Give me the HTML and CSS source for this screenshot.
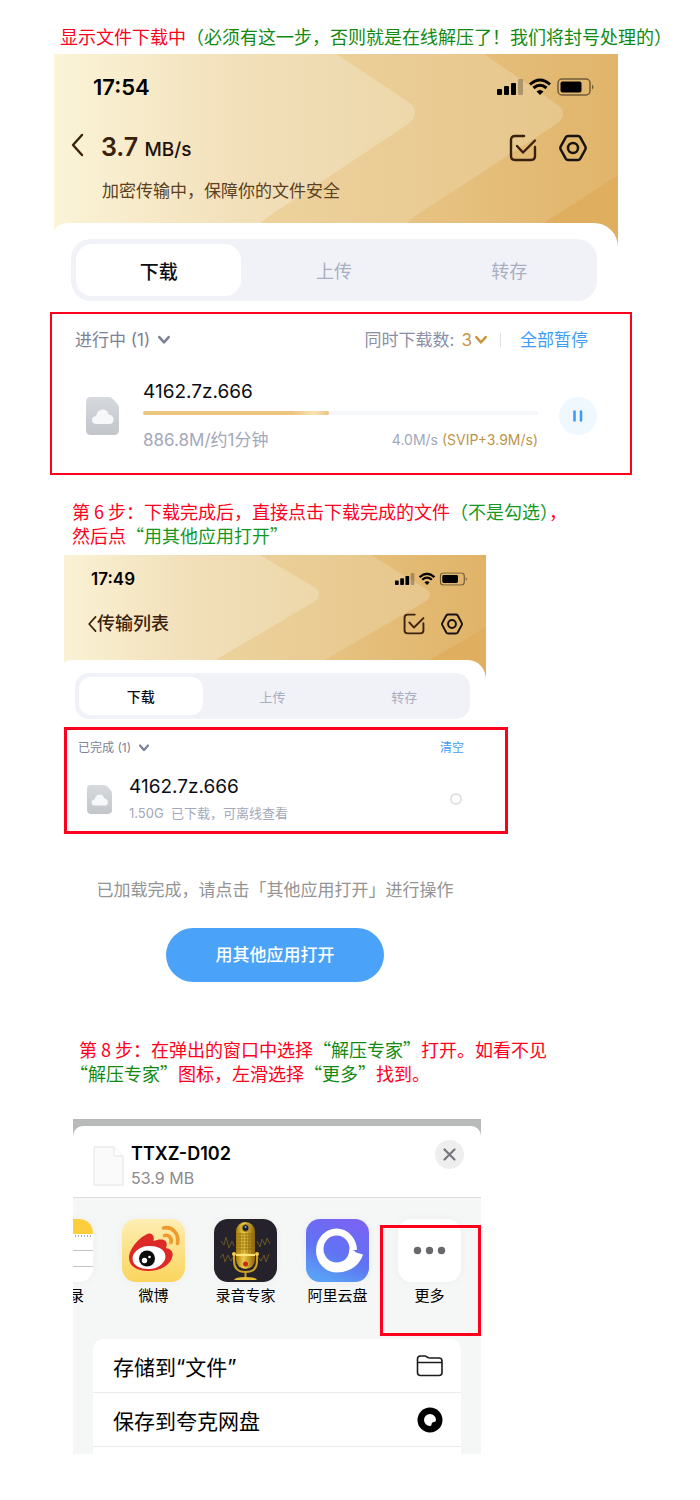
FILE: index.html
```html
<!DOCTYPE html>
<html lang="zh-CN">
<head>
    <meta charset="UTF-8">
    <meta name="viewport" content="width=device-width, initial-scale=1.0">
    <title>文件下载教程</title>
    <link rel="stylesheet" href="styles.css">
</head>
<body>

<!-- shared icons -->
<svg class="defs" width="0" height="0" aria-hidden="true">
    <defs>
        <linearGradient id="gold1" gradientUnits="userSpaceOnUse" x1="0" y1="0" x2="364" y2="0">
            <stop offset="0" stop-color="#fbf4d8"/>
            <stop offset="0.5" stop-color="#f2e0ba"/>
            <stop offset="1" stop-color="#edd7aa"/>
        </linearGradient>
        <linearGradient id="gold2" gradientUnits="userSpaceOnUse" x1="215" y1="0" x2="512" y2="0">
            <stop offset="0" stop-color="#edd29c"/>
            <stop offset="1" stop-color="#e6c68b"/>
        </linearGradient>
        <linearGradient id="gold3" gradientUnits="userSpaceOnUse" x1="358" y1="0" x2="584" y2="0">
            <stop offset="0" stop-color="#e7c383"/>
            <stop offset="1" stop-color="#e0b368"/>
        </linearGradient>
        <linearGradient id="fileGray" x1="0" y1="0" x2="0" y2="1">
            <stop offset="0" stop-color="#d6d9dd"/>
            <stop offset="1" stop-color="#c2c5ca"/>
        </linearGradient>
        <linearGradient id="weiboBg" x1="0" y1="0" x2="0" y2="1">
            <stop offset="0" stop-color="#fdeeb4"/>
            <stop offset="1" stop-color="#fad45c"/>
        </linearGradient>
        <linearGradient id="micGold" x1="0" y1="0" x2="1" y2="0">
            <stop offset="0" stop-color="#a87a10"/>
            <stop offset="0.4" stop-color="#f0cd45"/>
            <stop offset="1" stop-color="#8d6408"/>
        </linearGradient>
        <linearGradient id="aliBg" x1="0.8" y1="0" x2="0.4" y2="1">
            <stop offset="0" stop-color="#7b62f3"/>
            <stop offset="0.6" stop-color="#5f74f3"/>
            <stop offset="1" stop-color="#5aa0f6"/>
        </linearGradient>

        <g id="goldBg">
            <rect width="600" height="193" fill="#dfae5f"/>
            <path d="M0 0H577L649 54Q656 60 649 66L490 169V193H0Z" fill="url(#gold3)"/>
            <path d="M0 0H430L504 51Q514 59 504 69L358 164L330 193H0Z" fill="url(#gold2)"/>
            <path d="M0 0H282L356 49Q366 58 356 69L215 162L180 193H0Z" fill="url(#gold1)"/>
        </g>
    </defs>

    <symbol id="signals" viewBox="0 0 98 18">
        <rect x="0" y="11" width="5" height="6" rx="1"/>
        <rect x="7" y="8" width="5" height="9" rx="1"/>
        <rect x="14" y="5" width="5" height="12" rx="1"/>
        <rect x="21" y="1" width="5" height="16" rx="1" opacity="0.25"/>
        <path d="M33 6.500Q43 -2.500 53 6.500M36.500 10Q43 4.500 49.500 10" fill="none" stroke="#000" stroke-width="3"/>
        <path d="M39.500 13.500Q43 10.500 46.500 13.500L43 17Z"/>
        <rect x="61" y="1" width="32" height="16" rx="4" fill="none" stroke="#000" stroke-opacity="0.5" stroke-width="1.500"/>
        <rect x="63.500" y="3.500" width="21" height="11" rx="2"/>
        <path d="M95 6.500Q98 9 95 11.500Z" opacity="0.5"/>
    </symbol>

    <symbol id="check" viewBox="0 0 28 28">
        <path d="M15 2H6Q2 2 2 6V22Q2 26 6 26H22Q26 26 26 22V13M8 12L14 18.500L26 6.500" fill="none" stroke="#3b210b" stroke-width="2.400" stroke-linecap="round" stroke-linejoin="round"/>
    </symbol>

    <symbol id="hex" viewBox="0 0 28 28">
        <path d="M9 2H19Q20.500 2 21.300 3.300L26.300 12.500Q27 14 26.300 15.500L21.300 24.700Q20.500 26 19 26H9Q7.500 26 6.700 24.700L1.700 15.500Q1 14 1.700 12.500L6.700 3.300Q7.500 2 9 2Z" fill="none" stroke="#171310" stroke-width="2.500"/>
        <circle cx="14" cy="14" r="5" fill="none" stroke="#171310" stroke-width="2.500"/>
    </symbol>

    <symbol id="back" viewBox="0 0 14 24">
        <path d="M12 2L3 12L12 22" fill="none" stroke="#3b210b" stroke-width="2.400" stroke-linecap="round" stroke-linejoin="round"/>
    </symbol>

    <symbol id="down" viewBox="0 0 12 10">
        <path d="M2 2.500L6 7L10 2.500" fill="none" stroke="currentColor" stroke-width="2.200" stroke-linecap="round" stroke-linejoin="round"/>
    </symbol>

    <symbol id="file" viewBox="0 0 33 38">
        <path d="M5 0H23Q25 0 27 2L31 6.500Q33 8.500 33 11V33Q33 38 28 38H5Q0 38 0 33V5Q0 0 5 0Z" fill="url(#fileGray)"/>
        <path d="M10.500 27Q6 27 6 23Q6 19.500 10 19Q11.500 12.500 17 12.500Q21.500 12.500 22.500 17.500Q27.500 18 27.500 22.500Q27.500 27 23 27Z" fill="#f7f8f9"/>
    </symbol>
</svg>

<p class="caption caption-top">显示文件下载中<span class="green">（必须有这一步，否则就是在线解压了！我们将封号处理的）</span></p>

<!-- downloading -->
<section class="phone phone-large">
    <div class="gold">
        <svg class="gold-bg" viewBox="0 0 564 193" preserveAspectRatio="none" aria-hidden="true"><use href="#goldBg"/></svg>
        <div class="status">
            <span>17:54</span>
            <svg class="signals" viewBox="0 0 98 18"><use href="#signals"/></svg>
        </div>
        <div class="title-row">
            <button class="icon-btn" aria-label="返回"><svg class="back" viewBox="0 0 14 24"><use href="#back"/></svg></button>
            <h2 class="speed">3.7 <small>MB/s</small></h2>
            <div class="actions">
                <button class="icon-btn" aria-label="选择"><svg class="action" viewBox="0 0 28 28"><use href="#check"/></svg></button>
                <button class="icon-btn" aria-label="设置"><svg class="action" viewBox="0 0 28 28"><use href="#hex"/></svg></button>
            </div>
        </div>
        <p class="safe">加密传输中，保障你的文件安全</p>
    </div>
    <div class="sheet">
        <div class="tabs">
            <button class="tab active">下载</button>
            <button class="tab">上传</button>
            <button class="tab">转存</button>
        </div>
    </div>
</section>

<section class="redbox box-loading">
    <div class="list-head">
        <button class="text-btn group">进行中 (1)<svg class="down" viewBox="0 0 12 10"><use href="#down"/></svg></button>
        <div class="head-right">
            <span>同时下载数:</span>
            <button class="text-btn count">3<svg class="down" viewBox="0 0 12 10"><use href="#down"/></svg></button>
            <span class="divider"></span>
            <button class="text-btn blue">全部暂停</button>
        </div>
    </div>
    <div class="item">
        <svg class="file" viewBox="0 0 33 38"><use href="#file"/></svg>
        <div class="item-body">
            <div class="name">4162.7z.666</div>
            <div class="bar"><div class="bar-fill" style="width: 47%"></div></div>
            <div class="meta">
                <span>886.8M/约1分钟</span>
                <span class="rate">4.0M/s <span class="svip">(SVIP+3.9M/s)</span></span>
            </div>
        </div>
        <button class="pause" aria-label="暂停">
            <svg width="12" height="12" viewBox="0 0 12 12"><path d="M2.500 1.500V10.500M9 1.500V10.500" stroke="#3e9cf5" stroke-width="2.600" stroke-linecap="round"/></svg>
        </button>
    </div>
</section>

<p class="caption caption-six">第 6 步：下载完成后，直接点击下载完成的文件<span class="green">（不是勾选）</span>，<br>然后点<span class="green">“用其他应用打开”</span></p>

<!-- finished -->
<section class="phone phone-small">
    <div class="gold">
        <svg class="gold-bg" viewBox="20 0 564 193" preserveAspectRatio="none" aria-hidden="true"><use href="#goldBg"/></svg>
        <div class="status">
            <span>17:49</span>
            <svg class="signals" viewBox="0 0 98 18"><use href="#signals"/></svg>
        </div>
        <div class="title-row">
            <button class="icon-btn" aria-label="返回"><svg class="back" viewBox="0 0 14 24"><use href="#back"/></svg></button>
            <h2 class="page-title">传输列表</h2>
            <div class="actions">
                <button class="icon-btn" aria-label="选择"><svg class="action" viewBox="0 0 28 28"><use href="#check"/></svg></button>
                <button class="icon-btn" aria-label="设置"><svg class="action" viewBox="0 0 28 28"><use href="#hex"/></svg></button>
            </div>
        </div>
    </div>
    <div class="sheet">
        <div class="tabs">
            <button class="tab active">下载</button>
            <button class="tab">上传</button>
            <button class="tab">转存</button>
        </div>
    </div>
</section>

<section class="redbox box-done">
    <div class="list-head">
        <button class="text-btn group">已完成 (1)<svg class="down" viewBox="0 0 12 10"><use href="#down"/></svg></button>
        <button class="text-btn blue">清空</button>
    </div>
    <div class="item">
        <svg class="file" viewBox="0 0 33 38"><use href="#file"/></svg>
        <div class="item-body">
            <label class="name" for="pick">4162.7z.666</label>
            <div class="meta">1.50G&nbsp; 已下载，可离线查看</div>
        </div>
        <input class="pick" type="checkbox" id="pick">
    </div>
</section>

<section class="open">
    <p>已加载完成，请点击「其他应用打开」进行操作</p>
    <button class="open-btn">用其他应用打开</button>
</section>

<p class="caption caption-eight">第 8 步：在弹出的窗口中选择<span class="green">“解压专家”</span>打开。如看不见<br><span class="green">“解压专家”</span>图标，左滑选择<span class="green">“更多”</span>找到。</p>

<!-- share sheet -->
<section class="share">
    <div class="share-head">
        <svg class="paper" width="31" height="40" viewBox="0 0 31 40">
            <path d="M1 1H21L30 10V39H1Z" fill="#fafafa" stroke="#e3e3e3"/>
            <path d="M21 1V8Q21 10 23 10H30" fill="#fff" stroke="#e3e3e3"/>
        </svg>
        <div class="share-info">
            <h3>TTXZ-D102</h3>
            <p>53.9 MB</p>
        </div>
        <button class="close" aria-label="关闭">
            <svg width="13" height="13" viewBox="0 0 13 13"><path d="M1.500 1.500L11.500 11.500M11.500 1.500L1.500 11.500" stroke="#77777c" stroke-width="2.200" stroke-linecap="round"/></svg>
        </button>
    </div>

    <div class="apps">
        <button class="app">
            <svg class="app-icon" viewBox="0 0 63 63">
                <rect width="63" height="63" fill="#fff"/>
                <rect width="63" height="15" fill="#fcce3c"/>
                <path d="M0 17H63" stroke="#a9a99f" stroke-width="2" stroke-dasharray="1 2"/>
                <path d="M0 31.500H63M0 47.500H63" stroke="#c4c4c4"/>
            </svg>
            <span>备忘录</span>
        </button>
        <button class="app">
            <svg class="app-icon" viewBox="0 0 63 63">
                <rect width="63" height="63" fill="url(#weiboBg)"/>
                <path d="M7 39C7 30 18 17 27 14.500C31 14 32.500 18 31.500 22C36 20 42 19.500 44 22.500C45.500 25 44.500 27 44 29C49 30 51.500 33 50.500 37C49 46 38 52 26 52C15 52 7 47 7 39Z" fill="#dd2a26"/>
                <ellipse cx="27" cy="38.500" rx="16.500" ry="11.500" fill="#fff" transform="rotate(-7 27 38.500)"/>
                <circle cx="25" cy="39.500" r="8" fill="#0b0b0b"/>
                <circle cx="22.500" cy="41.500" r="2.700" fill="#fff"/>
                <circle cx="27.500" cy="38" r="1.300" fill="#fff"/>
                <path d="M41.500 9C50 7 57.500 14.500 55.500 24.500M42.500 16.500C47 15.500 50 19 49 23.500" fill="none" stroke="#ef9a2b" stroke-width="3.600" stroke-linecap="round"/>
            </svg>
            <span>微博</span>
        </button>
        <button class="app">
            <svg class="app-icon" viewBox="0 0 63 63">
                <rect width="63" height="63" fill="#26222c"/>
                <path d="M7 22L10 26L12 18L15 29L18 22L20 27M43 22L46 28L48 20L51 26L53 19L56 25M6 39L9 35L11 43L14 36L17 42L19 38M44 38L47 42L50 36L52 43L55 35" fill="none" stroke="#685923"/>
                <rect x="22" y="3" width="19" height="47" rx="9.500" fill="url(#micGold)"/>
                <path d="M22 15H41M22 18H41M22 21H41M22 24H41M22 27H41M22 30H41M26 14V34M29 14V34M32 14V34M35 14V34M38 14V34" stroke="#8b6810" stroke-width="0.700"/>
                <path d="M22 36H41" stroke="#ffe37a" stroke-width="2"/>
                <circle cx="31.500" cy="9" r="3.500" fill="#15203c" stroke="#ad871d"/>
                <circle cx="31.500" cy="8" r="1" fill="#8ba7df"/>
                <circle cx="31.500" cy="45" r="2.500" fill="#cf291d"/>
                <path d="M20 35V42Q20 53 31.500 53Q43 53 43 42V35M31.500 53V59" fill="none" stroke="#cba024" stroke-width="2"/>
                <circle cx="20" cy="35" r="2" fill="#efcd4c"/>
                <circle cx="43" cy="35" r="2" fill="#efcd4c"/>
                <path d="M20 61Q21 58 31.500 58Q42 58 43 61Z" fill="#e5bd35"/>
            </svg>
            <span>录音专家</span>
        </button>
        <button class="app">
            <svg class="app-icon" viewBox="0 0 63 63">
                <rect width="63" height="63" fill="url(#aliBg)"/>
                <path d="M51 31A20.500 22 0 1 0 30 53.500C42 53.500 53 48 57 35.500L50 33.500L48 31.500L43 30.500L43 33C42 40 36 43.500 31 43.500A13 13.500 0 1 1 43.500 31Z" fill="#fff"/>
            </svg>
            <span>阿里云盘</span>
        </button>
        <button class="app app-more">
            <svg class="app-icon" viewBox="0 0 63 63">
                <rect width="63" height="63" fill="#fff"/>
                <circle cx="19.500" cy="31.500" r="3.700" fill="#67676c"/>
                <circle cx="31.500" cy="31.500" r="3.700" fill="#67676c"/>
                <circle cx="43.500" cy="31.500" r="3.700" fill="#67676c"/>
            </svg>
            <span>更多</span>
        </button>
    </div>

    <div class="menu">
        <button class="menu-row">存储到“文件”
            <svg width="28" height="24" viewBox="0 0 28 24">
                <path d="M1.500 5Q1.500 2 4.500 2H8.500Q10 2 11 3L12 3.500Q12.500 4 14 4H23Q26 4 26 7V18.500Q26 21.500 23 21.500H4.500Q1.500 21.500 1.500 18.500ZM1.500 8.500H26" fill="none" stroke="#1b1b1b" stroke-width="1.600"/>
            </svg>
        </button>
        <button class="menu-row">保存到夸克网盘
            <svg width="28" height="26" viewBox="0 0 28 26">
                <circle cx="14" cy="13" r="12.500" fill="#000"/>
                <path d="M20 13A6 6 0 1 0 14 19Q15.500 19 15.500 17.500Q15.500 15 18 15Q20 15 20 13Z" fill="#fff"/>
            </svg>
        </button>
    </div>
</section>

</body>
</html>
```
FILE: styles.css
```css
*, *::after {
    box-sizing: border-box;
}
body {
    margin: 0;
    padding: 24px 0 44px;
    background-color: #fff;
    color: #000;
    font-family: Inter, "Noto Sans CJK SC", sans-serif;
}
h2, h3, p {
    margin: 0;
}
button {
    margin: 0;
    padding: 0;
    border: none;
    background: none;
    color: inherit;
    font: inherit;
    cursor: pointer;
}
svg {
    display: block;
    flex-shrink: 0;
}
.defs {
    position: absolute;
}

/* captions */
.caption {
    font-family: "Noto Sans CJK SC", sans-serif;
    font-size: 18px;
    line-height: 24px;
    color: #ff001c;
    text-spacing-trim: trim-start;
}
.green {
    color: #128a12;
}
.caption-top {
    margin-left: 60px;
}
.caption-six {
    margin: 24px 0 0 72px;
}
.caption-six .green {
    color: #14981f;
}
.caption-eight {
    margin: 55px 0 0 79px;
}

/* phone header */
.phone-large {
    margin: 6px 82px 0 54px;
}
.phone-small {
    margin: 8px 214px 0 64px;
}
.gold {
    position: relative;
    padding: 20px 23px 44px 39px;
}
.gold-bg {
    position: absolute;
    top: 0;
    left: 0;
    width: 100%;
    height: 100%;
    z-index: -1;
}
.status {
    display: flex;
    justify-content: space-between;
    align-items: center;
    font-size: 22px;
    font-weight: 600;
    line-height: 26px;
}
.signals {
    width: 98px;
    height: 18px;
}
.title-row {
    display: flex;
    align-items: center;
    height: 32px;
    margin: 32px 8px 0 -23px;
}
.icon-btn {
    display: block;
}
.back {
    width: 14px;
    height: 24px;
    margin-bottom: 6px;
}
.speed {
    margin-left: 17px;
    color: #3b210b;
    font-size: 25px;
    font-weight: 600;
    line-height: 32px;
}
.speed small {
    color: #1d1109;
    font-size: 19px;
    font-weight: 500;
}
.actions {
    display: flex;
    gap: 22px;
    margin-left: auto;
}
.action {
    width: 28px;
    height: 28px;
}
.safe {
    margin: 15px 0 0 9px;
    color: #5b4124;
    font-size: 17px;
    line-height: 24px;
}
.sheet {
    position: relative;
    margin-top: -24px;
    padding: 16px 21px 0 17px;
    border-radius: 14px 24px 0 0 / 9px 24px 0 0;
    background-color: #fff;
}
.tabs {
    display: grid;
    grid-template-columns: 1fr 1fr 1fr;
    height: 62px;
    border-radius: 20px;
    background-color: #f1f2f8;
}
.tab {
    margin: 5px;
    border-radius: 16px;
    color: #a9aec0;
    font-size: 18px;
}
.tab.active {
    background-color: #fff;
    color: #0c0e16;
    font-size: 19px;
    font-weight: 500;
}

.phone-small .gold {
    padding: 14px 18px 48px 27px;
}
.phone-small .status {
    font-size: 17px;
    line-height: 20px;
}
.phone-small .signals {
    width: 73px;
    height: 14px;
}
.phone-small .title-row {
    height: 24px;
    margin: 23px 5px 0 -4px;
}
.phone-small .back {
    width: 10px;
    height: 18px;
    margin-bottom: 0;
}
.page-title {
    color: #3b210b;
    font-size: 18px;
    font-weight: 500;
    line-height: 24px;
}
.phone-small .actions {
    gap: 16px;
}
.phone-small .action {
    width: 22px;
    height: 22px;
}
.phone-small .sheet {
    padding: 13px 16px 0 11px;
    border-radius: 8px 18px 0 0 / 4px 20px 0 0;
}
.phone-small .tabs {
    height: 46px;
    border-radius: 14px;
}
.phone-small .tab {
    margin: 4px;
    border-radius: 12px;
    font-size: 13px;
}
.phone-small .tab.active {
    font-size: 14px;
}

/* file lists */
.redbox {
    border: 2px solid #ff001c;
}
.box-loading {
    margin: 11px 68px 0 50px;
    padding: 14px 0 21px;
    font-size: 17px;
    line-height: 24px;
}
.list-head {
    display: flex;
    justify-content: space-between;
    align-items: center;
    padding: 0 42px 0 23px;
    color: #8a8fa5;
}
.text-btn {
    display: flex;
    align-items: center;
}
.group {
    gap: 7px;
    color: #7c8197;
}
.down {
    width: 14px;
    height: 12px;
}
.head-right {
    display: flex;
    align-items: center;
}
.count {
    gap: 2px;
    margin-left: 7px;
    color: #c8973f;
}
.divider {
    width: 1px;
    height: 14px;
    margin: 0 19px 0 12px;
    background-color: #dfe1e8;
}
.blue {
    color: #3e9cf5;
}
.item {
    display: flex;
    align-items: center;
    margin-top: 28px;
    padding: 0 33px 0 34px;
}
.file {
    width: 33px;
    height: 38px;
}
.item-body {
    flex: 1;
    margin-left: 24px;
}
.name {
    display: block;
    color: #0b0d14;
    font-size: 19px;
    line-height: 24px;
}
.bar {
    height: 4px;
    margin: 7px 0 13px;
    border-radius: 2px;
    background-color: #f4f6fa;
}
.bar-fill {
    height: 100%;
    border-radius: 2px;
    background: linear-gradient(90deg, #ecc57f 80%, #f8e2b4 92%, #e9c480);
}
.meta {
    display: flex;
    justify-content: space-between;
    align-items: center;
    color: #a3a8ba;
}
.rate {
    font-size: 14px;
}
.svip {
    color: #bd954a;
}
.pause {
    display: flex;
    justify-content: center;
    align-items: center;
    width: 38px;
    height: 38px;
    margin-left: 21px;
    border-radius: 50%;
    background-color: #eff8ff;
}

.box-done {
    margin: 8px 192px 0 64px;
    padding: 8px 0;
    border-width: 3px;
    font-size: 12px;
    line-height: 20px;
}
.box-done .list-head {
    padding: 0 41px 0 11px;
}
.box-done .down {
    width: 12px;
    height: 10px;
}
.box-done .item {
    margin-top: 17px;
    padding: 0 43px 0 20px;
}
.box-done .file {
    width: 25px;
    height: 29px;
}
.box-done .item-body {
    margin-left: 17px;
}
.box-done .meta {
    display: block;
    margin-top: 4px;
    font-size: 13px;
}
.pick {
    appearance: none;
    width: 12px;
    height: 12px;
    margin: 0;
    border: 2px solid #e0e1e3;
    border-radius: 50%;
}

.open {
    margin: 44px 214px 0 64px;
    text-align: center;
    font-size: 17px;
    line-height: 24px;
    color: #949494;
}
.open-btn {
    width: 218px;
    height: 54px;
    margin-top: 26px;
    border-radius: 27px;
    background-color: #4ba3f9;
    color: #fff;
    font-weight: 500;
    vertical-align: top;
}

/* share sheet */
.share {
    margin: 34px 219px 0 73px;
    padding-top: 7px;
    background: linear-gradient(#b9bbba 20px, #f5f6f6 20px);
}
.share-head {
    display: flex;
    align-items: flex-start;
    padding: 16px 17px 9px 20px;
    border-bottom: 1px solid #dcdddd;
    border-radius: 10px 10px 0 0;
    background-color: #fff;
}
.paper {
    margin-top: 4px;
}
.share-info {
    flex: 1;
    margin-left: 7px;
}
.share-info h3 {
    font-size: 18px;
    font-weight: 600;
    line-height: 24px;
}
.share-info p {
    margin-top: 2px;
    color: #8b8b8e;
    font-size: 16px;
    line-height: 20px;
}
.close {
    display: flex;
    justify-content: center;
    align-items: center;
    width: 29px;
    height: 29px;
    margin-top: -2px;
    border-radius: 50%;
    background-color: #eeeeef;
}
.apps {
    display: flex;
    justify-content: flex-end;
    gap: 29px;
    padding: 21px 20px 33px;
    overflow: hidden;
}
.app {
    position: relative;
    flex-shrink: 0;
    width: 63px;
    font-size: 15px;
    line-height: 20px;
    white-space: nowrap;
}
.app-icon {
    width: 63px;
    height: 63px;
    margin-bottom: 4px;
    border-radius: 14px;
    box-shadow: 0 0 10px rgba(0, 0, 0, 0.04);
}
/* highlight around the last app */
.app-more::after {
    content: "";
    position: absolute;
    top: 6px;
    left: -18px;
    right: -20px;
    height: 111px;
    border: 3px solid #ff001c;
}
.menu {
    margin: 0 20px;
    padding-bottom: 7px;
    border-radius: 10px 10px 0 0;
    background-color: #fff;
}
.menu-row {
    display: flex;
    justify-content: space-between;
    align-items: center;
    width: 100%;
    height: 54px;
    padding: 0 17px 0 20px;
    border-bottom: 1px solid #e9eaea;
    font-size: 21px;
}
```
